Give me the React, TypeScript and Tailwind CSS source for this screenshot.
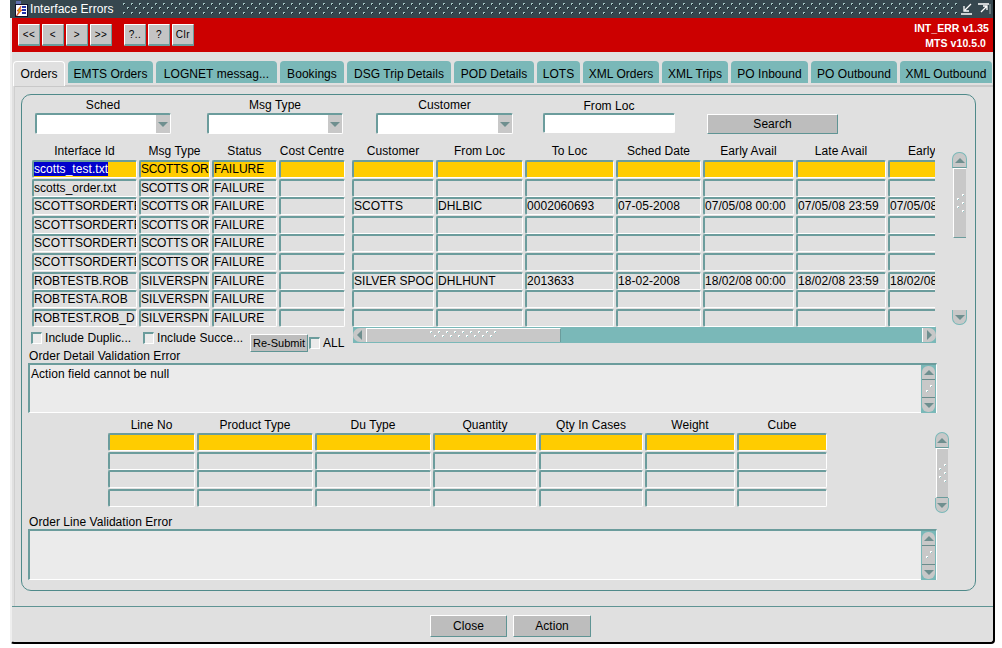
const tabs = [
  { label: "EMTS Orders", w: "w-[85px]" },
  { label: "LOGNET messag...", w: "w-[121px]" },
  { label: "Bookings", w: "w-[64px]" },
  { label: "DSG Trip Details", w: "w-[104px]" },
  { label: "POD Details", w: "w-[80px]" },
  { label: "LOTS", w: "w-[43px]" },
  { label: "XML Orders", w: "w-[76px]" },
  { label: "XML Trips", w: "w-[66px]" },
  { label: "PO Inbound", w: "w-[77px]" },
  { label: "PO Outbound", w: "w-[86px]" },
  { label: "XML Outbound", w: "w-[92px]" },
];

const leftCols = ["Interface Id", "Msg Type", "Status", "Cost Centre"];
const rightCols = ["Customer", "From Loc", "To Loc", "Sched Date", "Early Avail", "Late Avail", "Early"];
const lineCols = ["Line No", "Product Type", "Du Type", "Quantity", "Qty In Cases", "Weight", "Cube"];

const leftRows = [
  ["scotts_test.txt", "SCOTTS OR", "FAILURE", ""],
  ["scotts_order.txt", "SCOTTS OR", "FAILURE", ""],
  ["SCOTTSORDERTEST", "SCOTTS OR", "FAILURE", ""],
  ["SCOTTSORDERTEST", "SCOTTS OR", "FAILURE", ""],
  ["SCOTTSORDERTEST", "SCOTTS OR", "FAILURE", ""],
  ["SCOTTSORDERTEST", "SCOTTS OR", "FAILURE", ""],
  ["ROBTESTB.ROB", "SILVERSPN", "FAILURE", ""],
  ["ROBTESTA.ROB", "SILVERSPN", "FAILURE", ""],
  ["ROBTEST.ROB_D", "SILVERSPN", "FAILURE", ""],
];

const blank = ["", "", "", "", "", "", ""];
const rightRows = [
  blank,
  blank,
  ["SCOTTS", "DHLBIC", "0002060693", "07-05-2008", "07/05/08 00:00", "07/05/08 23:59", "07/05/08 00:00"],
  blank,
  blank,
  blank,
  ["SILVER SPOON", "DHLHUNT", "2013633", "18-02-2008", "18/02/08 00:00", "18/02/08 23:59", "18/02/08 00:00"],
  blank,
  blank,
];

const fieldEdge =
  "border-t-2 border-l-2 border-b border-r border-t-[#6b9c9c] border-l-[#6b9c9c] border-b-white border-r-white rounded-[2px]";

function Triangle({ dir }: { dir: "up" | "down" | "left" | "right" }) {
  const points = {
    up: "0,6 5,1 10,6",
    down: "0,1 10,1 5,6",
    left: "6,0 6,10 1,5",
    right: "1,0 1,10 6,5",
  }[dir];
  const box = dir === "up" || dir === "down" ? "0 0 10 7" : "0 0 7 10";
  const size = dir === "up" || dir === "down" ? "w-[10px] h-[7px]" : "w-[7px] h-[10px]";
  return (
    <svg viewBox={box} className={size}>
      <polygon points={points} fill="#6f8f8f" />
    </svg>
  );
}

function Dot({ x, y }: { x: number; y: number }) {
  return (
    <g>
      <rect x={x} y={y} width="2" height="1" fill="#fff" />
      <rect x={x} y={y + 1} width="1" height="1" fill="#fff" />
      <rect x={x + 1} y={y + 1} width="1" height="1" fill="#8fc4c4" />
    </g>
  );
}

function Grip({ wide }: { wide?: boolean }) {
  if (wide) {
    return (
      <svg viewBox="0 0 68 9" className="w-[68px] h-[9px]">
        {[0, 8, 16, 24, 32, 40, 48, 56, 64].map((x) => (
          <g key={x}>
            <Dot x={x + 1} y={0} />
            <Dot x={x - 3} y={4} />
          </g>
        ))}
      </svg>
    );
  }
  return (
    <svg viewBox="0 0 9 18" className="w-[9px] h-[18px]">
      <Dot x={6} y={0} />
      <Dot x={1} y={4} />
      <Dot x={6} y={8} />
      <Dot x={1} y={12} />
      <Dot x={6} y={16} />
    </svg>
  );
}

function VScroll({ thumb, className }: { thumb: string; className: string }) {
  return (
    <div className={`flex flex-col ${className}`}>
      <div className="h-[16px] shrink-0 rounded-t-[7px] bg-[#c8c8c8] border-t border-x border-[#7ab8b8] border-b border-b-[#6b9c9c] flex items-center justify-center">
        <Triangle dir="up" />
      </div>
      <div className={`${thumb} ml-[1px] mr-[1px] bg-[#c8c8c8] border-t border-l border-white border-b border-b-[#6b9c9c] flex items-center justify-center`}>
        <Grip />
      </div>
      <div className={thumb === "flex-1" ? "hidden" : "flex-1"} />
      <div className="h-[15px] shrink-0 rounded-b-[7px] bg-[#c8c8c8] border-b border-x border-[#7ab8b8] flex items-center justify-center">
        <Triangle dir="down" />
      </div>
    </div>
  );
}

function TextBox({ text, className }: { text?: string; className: string }) {
  return (
    <div className={`flex bg-[#ebebeb] border-t-2 border-l-2 border-t-[#6b9c9c] border-l-[#6b9c9c] border-b border-r border-b-white border-r-white ${className}`}>
      <div className="flex-1 pl-[1px] pt-[2px] leading-[15px]">{text}</div>
      <div className="w-[15px] mb-[-1px] bg-[#7ab8b8] px-[1px] py-[1px] flex flex-col">
        <div className="h-[14px] rounded-t-[6px] bg-[#c8c8c8] border-b border-b-[#6b8c8c] flex items-center justify-center">
          <Triangle dir="up" />
        </div>
        <div className="flex-1 bg-[#c8c8c8] border-b border-b-[#6b8c8c] flex items-center justify-center">
          <svg viewBox="0 0 10 10" className="w-[10px] h-[10px]">
            <Dot x={6} y={1} />
            <Dot x={2} y={6} />
          </svg>
        </div>
        <div className="h-[14px] rounded-b-[6px] bg-[#c8c8c8] flex items-center justify-center">
          <Triangle dir="down" />
        </div>
      </div>
    </div>
  );
}

function Combo({ w }: { w: string }) {
  return (
    <div className={`${w} h-[21px] flex bg-white ${fieldEdge}`}>
      <div className="flex-1" />
      <div className="w-[14px] bg-[#c8c8c8] flex items-center justify-center">
        <Triangle dir="down" />
      </div>
    </div>
  );
}

function Cell({ text, yellow, selected, tight }: { text?: string; yellow?: boolean; selected?: boolean; tight?: boolean }) {
  return (
    <div
      className={`h-[18px] overflow-hidden whitespace-nowrap leading-[15px] ${fieldEdge} ${
        yellow ? "bg-[#ffcc00]" : "bg-[#e0e0e0]"
      } ${tight ? "tracking-[-0.3px]" : ""}`}
    >
      {selected ? <span className="bg-[#0000cc] text-white">{text}</span> : text}
    </div>
  );
}

function Check({ label, className }: { label: string; className: string }) {
  return (
    <div className={`flex items-center gap-[3px] whitespace-nowrap ${className}`}>
      <div className="w-[11px] h-[12px] bg-[#ebebeb] border-t-2 border-l-2 border-t-[#6b9c9c] border-l-[#6b9c9c] border-b border-r border-b-white border-r-white" />
      <span>{label}</span>
    </div>
  );
}

function ToolButton({ label }: { label: string }) {
  return (
    <button className="w-[22px] h-[22px] bg-[#c4c4c4] border-t border-l border-white border-b-2 border-r border-b-[#6b9c9c] border-r-[#6b9c9c] text-[10px] leading-none text-black tracking-[0.5px] rounded-[1px]">
      {label}
    </button>
  );
}

function ActionButton({ label, className }: { label: string; className: string }) {
  return (
    <button className={`bg-[#bdbdbd] border-t border-l border-white border-b border-r border-b-[#5f9494] border-r-[#5f9494] rounded-[1px] ${className}`}>
      {label}
    </button>
  );
}

export default function App() {
  return (
    <div className="w-[1002px] h-[648px] bg-white overflow-hidden pl-[10px] font-['Liberation_Sans',sans-serif] text-[12px] text-black tracking-[0.05px]">
      {/* title bar */}
      <div className="w-[985px] h-[18px] bg-[#36474f] border-r-2 border-r-black flex items-center text-white">
        <svg viewBox="0 0 16 17" className="w-[16px] h-[17px] ml-[3px] shrink-0">
          <rect x="3" y="0" width="5" height="3" fill="#5f6fb0" />
          <rect x="2.5" y="3.5" width="12" height="12" fill="#fff" stroke="#10102a" />
          <rect x="9" y="5" width="4" height="2" fill="#2233aa" />
          <rect x="9" y="8" width="4" height="2" fill="#2233aa" />
          <rect x="9" y="11" width="4" height="2" fill="#2233aa" />
          <polygon points="8,5 4,10 6,10 3.5,15 9,9 7,9" fill="#e8c000" stroke="#cc2222" strokeWidth="0.6" />
        </svg>
        <span className="ml-[1px] w-[92px] shrink-0 whitespace-nowrap">Interface Errors</span>
        <svg className="flex-1 h-[14px] min-w-0">
          <pattern id="dither" width="8" height="9" patternUnits="userSpaceOnUse">
            <rect x="1" y="1" width="2" height="1" fill="#a4c4c4" />
            <rect x="1" y="2" width="1" height="1" fill="#a4c4c4" />
            <rect x="2" y="2" width="1" height="1" fill="#0e1a1e" />
            <rect x="5" y="5" width="2" height="1" fill="#a4c4c4" />
            <rect x="5" y="6" width="1" height="1" fill="#a4c4c4" />
            <rect x="6" y="6" width="1" height="1" fill="#0e1a1e" />
          </pattern>
          <rect width="100%" height="100%" fill="url(#dither)" />
        </svg>
        <svg viewBox="0 0 32 12" className="w-[32px] h-[12px] ml-[2px] mr-[1px] shrink-0">
          <path d="M11 1 L5 7 M4 3 V8 H9 M1 11 H12" stroke="#fff" strokeWidth="1.3" fill="none" />
          <path d="M18 1 H29 M21 9 L27 3 M23 3 H27 V7" stroke="#fff" strokeWidth="1.3" fill="none" />
          <path d="M30 1 V11" stroke="#9aa" strokeWidth="1" fill="none" />
        </svg>
      </div>

      {/* window body */}
      <div className="w-[985px] h-[626px] flex flex-col bg-[#e0e0e0] border-l-2 border-l-[#efefef] border-r-2 border-r-black border-b-2 border-b-black rounded-b-[4px]">
        <div className="h-[34px] shrink-0 bg-[#cc0000] flex justify-between pl-[6px] pr-[4px]">
          <div className="flex items-start pt-[6px] gap-[2px]">
            <ToolButton label="<<" />
            <ToolButton label="<" />
            <ToolButton label=">" />
            <ToolButton label=">>" />
            <div className="w-[8px]" />
            <ToolButton label="?.." />
            <ToolButton label="?" />
            <ToolButton label="Clr" />
          </div>
          <div className="flex flex-col items-end pt-[3px] text-white font-bold text-[10.5px] leading-[15px]">
            <span>INT_ERR v1.35</span>
            <span className="pr-[3px]">MTS v10.5.0</span>
          </div>
        </div>

        {/* tabs */}
        <div className="flex h-[24px] shrink-0 mt-[9px] pl-[1px] gap-[3px] items-start">
          <div className="w-[52px] h-[25px] shrink-0 bg-[#e0e0e0] rounded-t-[4px] border-t border-l border-white border-r border-r-white flex items-center justify-center pb-[1px] relative z-10">
            Orders
          </div>
          {tabs.map((tab) => (
            <div
              key={tab.label}
              className={`${tab.w} h-[22px] shrink-0 bg-[#7ab8b8] rounded-t-[4px] flex items-center justify-center whitespace-nowrap pt-[3px]`}
            >
              {tab.label}
            </div>
          ))}
        </div>

        {/* tab page */}
        <div className="h-[521px] shrink-0 ml-[2px] border-t-2 border-t-[#c8c8c8] border-l border-l-[#cfcfcf] pt-[7px] pl-[6px]">
          <div className="w-[955px] h-[497px] rounded-[10px] border border-[#4f8a8a]">
            <div className="flex pl-[13px] pt-[3px]">
              <div className="w-[136px] flex flex-col items-center">
                <span className="h-[15px] leading-[14px]">Sched</span>
                <Combo w="w-[136px]" />
              </div>
              <div className="w-[136px] ml-[36px] flex flex-col items-center">
                <span className="h-[15px] leading-[14px]">Msg Type</span>
                <Combo w="w-[136px]" />
              </div>
              <div className="w-[137px] ml-[33px] flex flex-col items-center">
                <span className="h-[15px] leading-[14px]">Customer</span>
                <Combo w="w-[137px]" />
              </div>
              <div className="w-[132px] ml-[30px] flex flex-col items-center">
                <span className="h-[15px] leading-[16px]">From Loc</span>
                <div className={`w-[132px] h-[20px] bg-white ${fieldEdge}`} />
              </div>
              <div className="ml-[32px] pt-[16px]">
                <ActionButton label="Search" className="w-[131px] h-[20px]" />
              </div>
            </div>

            {/* main block */}
            <div className="flex items-start mt-[10px] ml-[10px]">
              <div className="grid w-[313px] grid-cols-[105px_71px_65px_66px] gap-x-[2px] auto-rows-[18.6px] shrink-0 [grid-template-rows:16px]">
                {leftCols.map((col) => (
                  <div key={col} className="text-center whitespace-nowrap leading-[14px]">{col}</div>
                ))}
                {leftRows.map((row, r) =>
                  row.map((value, c) => (
                    <Cell
                      key={`${r}-${c}`}
                      text={value}
                      yellow={r === 0}
                      selected={r === 0 && c === 0}
                      tight={value === "SCOTTS OR"}
                    />
                  )),
                )}
              </div>
              <div className="ml-[7px] w-[583px] shrink-0 overflow-hidden">
                <div className="grid w-[660px] grid-cols-[82px_87px_89px_85px_91px_90px_90px] gap-x-[2px] auto-rows-[18.6px] [grid-template-rows:16px]">
                  {rightCols.map((col, c) => (
                    <div key={col} className={`whitespace-nowrap leading-[14px] ${c === 6 ? "text-left pl-[20px]" : "text-center"}`}>
                      {col}
                    </div>
                  ))}
                  {rightRows.map((row, r) =>
                    row.map((value, c) => <Cell key={`${r}-${c}`} text={value} yellow={r === 0} />),
                  )}
                </div>
              </div>
              <VScroll thumb="h-[70px]" className="ml-[17px] mt-[8px] w-[15px] h-[173px]" />
            </div>

            {/* options + horizontal scroll */}
            <div className="flex items-start h-[22px] ml-[9px]">
              <Check label="Include Duplic..." className="w-[112px] mt-[2px]" />
              <Check label="Include Succe..." className="w-[107px] mt-[2px]" />
              <ActionButton label="Re-Submit" className="w-[58px] h-[18px] mt-[7px] text-[11px] tracking-normal" />
              <Check label="ALL" className="ml-[1px] mt-[7px]" />
              <div className="ml-[8px] w-[583px] h-[16px] flex bg-[#7ab8b8] py-[1px]">
                <div className="w-[14px] rounded-l-[7px] bg-[#c8c8c8] border-r border-white flex items-center justify-center">
                  <Triangle dir="left" />
                </div>
                <div className="w-[194px] bg-[#c8c8c8] border-t border-white border-r border-r-[#6b9c9c] flex items-center justify-center">
                  <Grip wide />
                </div>
                <div className="flex-1" />
                <div className="w-[14px] rounded-r-[7px] bg-[#c8c8c8] border-l border-white flex items-center justify-center">
                  <Triangle dir="right" />
                </div>
              </div>
            </div>

            <div className="ml-[7px] h-[14px] leading-[14px]">Order Detail Validation Error</div>
            <TextBox text="Action field cannot be null" className="ml-[6px] w-[909px] h-[50px]" />

            {/* line block */}
            <div className="flex items-start mt-[5px] ml-[86px]">
              <div className="grid w-[719px] shrink-0 grid-cols-[87px_116px_116px_104px_104px_90px_90px] gap-x-[2px] auto-rows-[18.4px] [grid-template-rows:15px]">
                {lineCols.map((col) => (
                  <div key={col} className="text-center whitespace-nowrap leading-[14px]">{col}</div>
                ))}
                {[0, 1, 2, 3].map((r) =>
                  lineCols.map((col) => <Cell key={`${r}-${col}`} yellow={r === 0} />),
                )}
              </div>
              <VScroll thumb="flex-1" className="ml-[108px] mt-[14px] w-[14px] h-[81px]" />
            </div>

            <div className="ml-[7px] mt-[2px] h-[14px] leading-[14px]">Order Line Validation Error</div>
            <TextBox className="ml-[6px] w-[909px] h-[51px]" />
          </div>
        </div>

        {/* footer */}
        <div className="flex-1 border-t border-t-[#5f9494] flex items-start justify-center gap-[6px] pt-[8px] pl-[16px]">
          <ActionButton label="Close" className="w-[77px] h-[22px]" />
          <ActionButton label="Action" className="w-[78px] h-[22px]" />
        </div>
      </div>
    </div>
  );
}
